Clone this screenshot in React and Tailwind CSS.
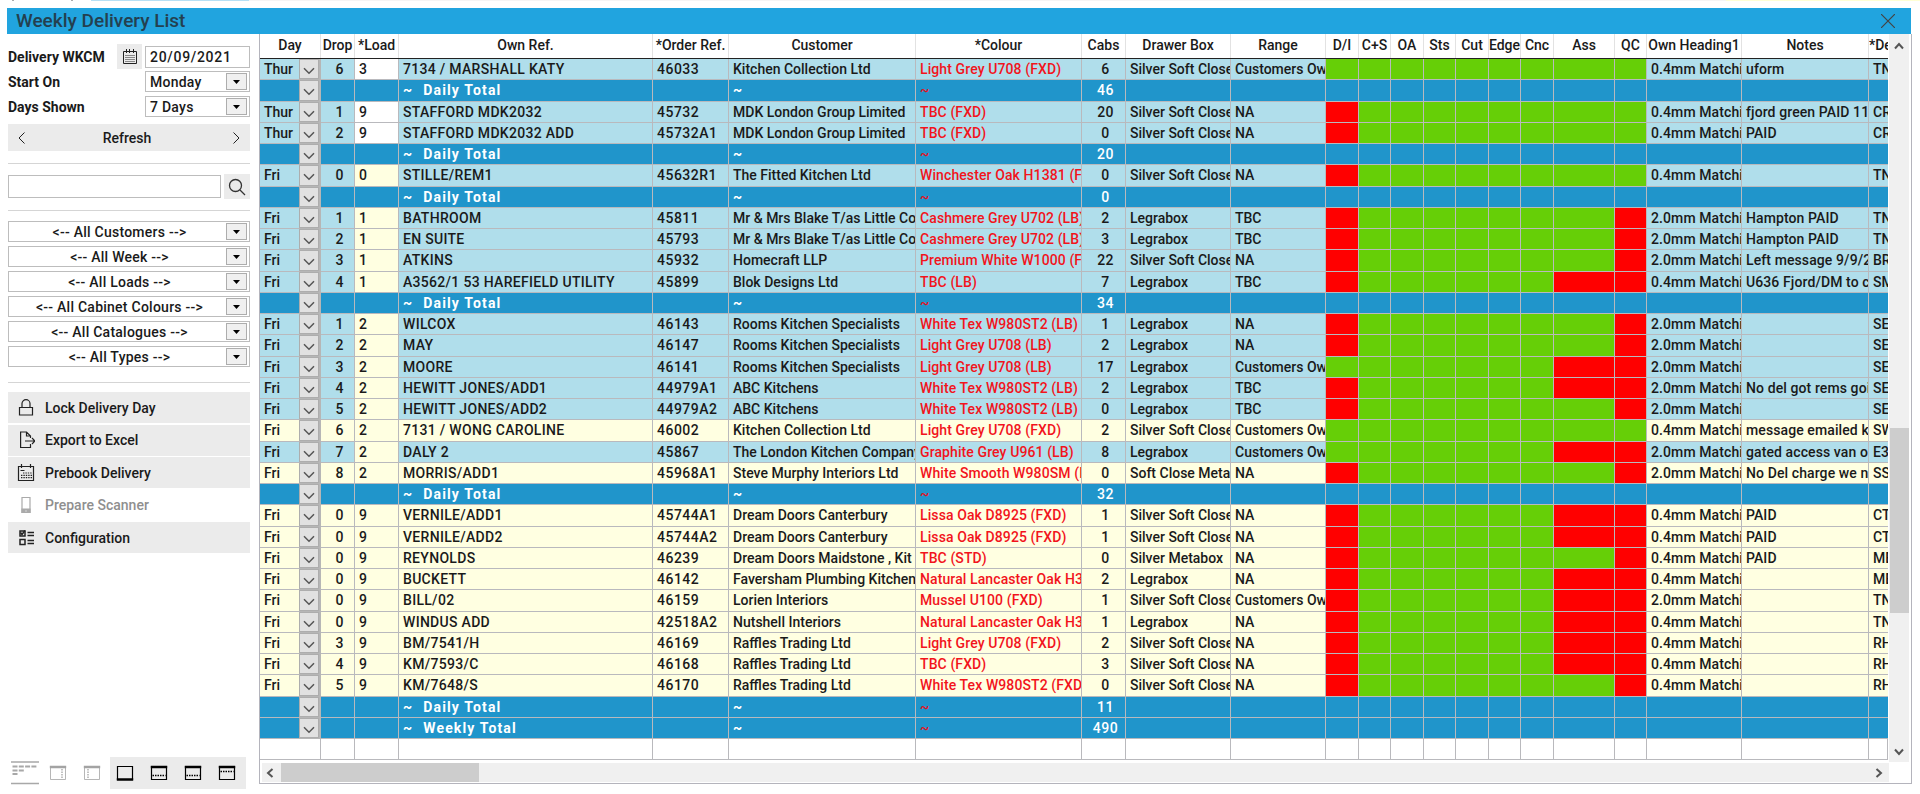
import { clsx } from 'clsx';

// Day, Drop, Load, Own Ref, Order Ref, Customer, Colour, Cabs, Drawer Box, Range, red flags, Heading1, Notes, Delivery
// flags: d = D/I, a = Ass, q = QC
const ROWS = [
  ['Thur', '6', '3', '7134 / MARSHALL KATY', '46033', 'Kitchen Collection Ltd', 'Light Grey U708 (FXD)', '6', 'Silver Soft Close', 'Customers Own', '', '0.4', 'uform', 'TN', 'blue'],
  { total: '46' },
  ['Thur', '1', '9', 'STAFFORD MDK2032', '45732', 'MDK London Group Limited', 'TBC (FXD)', '20', 'Silver Soft Close', 'NA', 'd', '0.4', 'fjord green PAID 11', 'CR', 'blue'],
  ['Thur', '2', '9', 'STAFFORD MDK2032 ADD', '45732A1', 'MDK London Group Limited', 'TBC (FXD)', '0', 'Silver Soft Close', 'NA', 'd', '0.4', 'PAID', 'CR', 'blue'],
  { total: '20' },
  ['Fri', '0', '0', 'STILLE/REM1', '45632R1', 'The Fitted Kitchen Ltd', 'Winchester Oak H1381 (FXD)', '0', 'Silver Soft Close', 'NA', 'd', '0.4', '', 'TN', 'blue'],
  { total: '0' },
  ['Fri', '1', '1', 'BATHROOM', '45811', 'Mr & Mrs Blake T/as Little Co', 'Cashmere Grey U702 (LB)', '2', 'Legrabox', 'TBC', 'dq', '2.0', 'Hampton PAID', 'TN', 'blue'],
  ['Fri', '2', '1', 'EN SUITE', '45793', 'Mr & Mrs Blake T/as Little Co', 'Cashmere Grey U702 (LB)', '3', 'Legrabox', 'TBC', 'dq', '2.0', 'Hampton PAID', 'TN', 'blue'],
  ['Fri', '3', '1', 'ATKINS', '45932', 'Homecraft LLP', 'Premium White W1000 (FXD)', '22', 'Silver Soft Close', 'NA', 'dq', '2.0', 'Left message 9/9/21', 'BR', 'blue'],
  ['Fri', '4', '1', 'A3562/1 53 HAREFIELD UTILITY', '45899', 'Blok Designs Ltd', 'TBC (LB)', '7', 'Legrabox', 'TBC', 'daq', '0.4', 'U636 Fjord/DM to c', 'SM', 'blue'],
  { total: '34' },
  ['Fri', '1', '2', 'WILCOX', '46143', 'Rooms Kitchen Specialists', 'White Tex W980ST2 (LB)', '1', 'Legrabox', 'NA', 'dq', '2.0', '', 'SE', 'blue'],
  ['Fri', '2', '2', 'MAY', '46147', 'Rooms Kitchen Specialists', 'Light Grey U708 (LB)', '2', 'Legrabox', 'NA', 'dq', '2.0', '', 'SE', 'blue'],
  ['Fri', '3', '2', 'MOORE', '46141', 'Rooms Kitchen Specialists', 'Light Grey U708 (LB)', '17', 'Legrabox', 'Customers Own', 'aq', '2.0', '', 'SE', 'blue'],
  ['Fri', '4', '2', 'HEWITT JONES/ADD1', '44979A1', 'ABC Kitchens', 'White Tex W980ST2 (LB)', '2', 'Legrabox', 'TBC', 'daq', '2.0', 'No del got rems going', 'SE', 'blue'],
  ['Fri', '5', '2', 'HEWITT JONES/ADD2', '44979A2', 'ABC Kitchens', 'White Tex W980ST2 (LB)', '0', 'Legrabox', 'TBC', 'dq', '2.0', '', 'SE', 'blue'],
  ['Fri', '6', '2', '7131 / WONG CAROLINE', '46002', 'Kitchen Collection Ltd', 'Light Grey U708 (FXD)', '2', 'Silver Soft Close', 'Customers Own', '', '0.4', 'message emailed k', 'SW', 'yellow'],
  ['Fri', '7', '2', 'DALY 2', '45867', 'The London Kitchen Company', 'Graphite Grey U961 (LB)', '8', 'Legrabox', 'Customers Own', 'aq', '2.0', 'gated access van on', 'E3', 'blue'],
  ['Fri', '8', '2', 'MORRIS/ADD1', '45968A1', 'Steve Murphy Interiors Ltd', 'White Smooth W980SM (LB)', '0', 'Soft Close Metabox', 'NA', 'dq', '2.0', 'No Del charge we n', 'SS', 'yellow'],
  { total: '32' },
  ['Fri', '0', '9', 'VERNILE/ADD1', '45744A1', 'Dream Doors Canterbury', 'Lissa Oak D8925 (FXD)', '1', 'Silver Soft Close', 'NA', 'daq', '0.4', 'PAID', 'CT', 'yellow'],
  ['Fri', '0', '9', 'VERNILE/ADD2', '45744A2', 'Dream Doors Canterbury', 'Lissa Oak D8925 (FXD)', '1', 'Silver Soft Close', 'NA', 'daq', '0.4', 'PAID', 'CT', 'yellow'],
  ['Fri', '0', '9', 'REYNOLDS', '46239', 'Dream Doors Maidstone , Kit', 'TBC (STD)', '0', 'Silver Metabox', 'NA', 'dq', '0.4', 'PAID', 'ME', 'yellow'],
  ['Fri', '0', '9', 'BUCKETT', '46142', 'Faversham Plumbing Kitchens', 'Natural Lancaster Oak H3', '2', 'Legrabox', 'NA', 'daq', '0.4', '', 'ME', 'yellow'],
  ['Fri', '0', '9', 'BILL/02', '46159', 'Lorien Interiors', 'Mussel U100 (FXD)', '1', 'Silver Soft Close', 'Customers Own', 'daq', '2.0', '', 'TN', 'yellow'],
  ['Fri', '0', '9', 'WINDUS ADD', '42518A2', 'Nutshell Interiors', 'Natural Lancaster Oak H3', '1', 'Legrabox', 'NA', 'daq', '0.4', '', 'TN', 'yellow'],
  ['Fri', '3', '9', 'BM/7541/H', '46169', 'Raffles Trading Ltd', 'Light Grey U708 (FXD)', '2', 'Silver Soft Close', 'NA', 'daq', '0.4', '', 'RH', 'yellow'],
  ['Fri', '4', '9', 'KM/7593/C', '46168', 'Raffles Trading Ltd', 'TBC (FXD)', '3', 'Silver Soft Close', 'NA', 'daq', '0.4', '', 'RH', 'yellow'],
  ['Fri', '5', '9', 'KM/7648/S', '46170', 'Raffles Trading Ltd', 'White Tex W980ST2 (FXD)', '0', 'Silver Soft Close', 'NA', 'dq', '0.4', '', 'RH', 'yellow'],
  { total: '11' },
  { total: '490', label: 'Weekly Total' },
];

const HEADERS = ['Drop', '*Load', 'Own Ref.', '*Order Ref.', 'Customer', '*Colour', 'Cabs', 'Drawer Box', 'Range', 'D/I', 'C+S', 'OA', 'Sts', 'Cut', 'Edge', 'Cnc', 'Ass', 'QC', 'Own Heading1', 'Notes'];

const FILTERS = ['<-- All Customers -->', '<-- All Week -->', '<-- All Loads -->', '<-- All Cabinet Colours -->', '<-- All Catalogues -->', '<-- All Types -->'];

const GRID = 'grid grid-cols-[39px_22px_34px_44px_254px_76px_187px_166px_44px_105px_95px_33px_32px_33px_32px_33px_32px_33px_61px_32px_95px_127px_19px]';

function Cell({ className, children }) {
  return (
    <div className={clsx('overflow-hidden whitespace-pre border-r border-b border-[#b9b9bd] pl-1', className)}>
      {children}
    </div>
  );
}

function DayPicker() {
  return (
    <div className="bg-[#b6b6b6] pb-px pr-0.5">
      <div className="flex h-full items-center justify-center border border-[#adadad] bg-[#e1e1e1] pt-1">
        <svg width="12" height="8" viewBox="0 0 12 8" fill="none" stroke="#555" strokeWidth="1.5">
          <path d="M1 1.2 6 6.2 11 1.2" />
        </svg>
      </div>
    </div>
  );
}

function TotalRow({ total, label = 'Daily Total' }) {
  return (
    <div className={clsx(GRID, 'h-[21.26px] bg-[#2095cb] leading-[21px] text-white')}>
      <Cell className="border-r-0" />
      <DayPicker />
      <Cell />
      <Cell />
      <Cell className="font-bold tracking-[1.15px]">
        ~<span className="ml-2.5">{label}</span>
      </Cell>
      <Cell />
      <Cell className="font-bold">~</Cell>
      <Cell className="text-[#e0141e]">~</Cell>
      <Cell className="pl-0 text-center tracking-[0.6px]">{total}</Cell>
      {Array.from({ length: 13 }, (_, i) => <Cell key={i} />)}
      <Cell className="border-r-0" />
    </div>
  );
}

function DeliveryRow({ row }) {
  const [day, drop, load, ownRef, orderRef, customer, colour, cabs, box, range, flags, heading, notes, del, tone] = row;
  const red = [flags.includes('d'), false, false, false, false, false, false, flags.includes('a'), flags.includes('q')];
  return (
    <div className={clsx(GRID, 'h-[21.26px] leading-[21px]', tone === 'blue' ? 'bg-[#b0deeb]' : 'bg-[#ffffe1]')}>
      <Cell className="border-r-0">{day}</Cell>
      <DayPicker />
      <Cell className="pl-0 text-center">{drop}</Cell>
      <Cell className={day === 'Thur' ? 'bg-white' : 'bg-[#ffffe1]'}>{load}</Cell>
      <Cell className="tracking-[0.3px]">{ownRef}</Cell>
      <Cell className="tracking-[0.5px]">{orderRef}</Cell>
      <Cell>{customer}</Cell>
      <Cell className="tracking-[0.1px] text-[#f2141c]">{colour}</Cell>
      <Cell className="pl-0 text-center tracking-[0.4px]">{cabs}</Cell>
      <Cell>{box}</Cell>
      <Cell>{range}</Cell>
      {red.map((isRed, i) => <Cell key={i} className={isRed ? 'bg-[#ff0000]' : 'bg-[#66cf07]'} />)}
      <Cell className="tracking-[0.1px]">{heading}mm Matching</Cell>
      <Cell className="tracking-[0.1px]">{notes}</Cell>
      <Cell className="border-r-0">{del}</Cell>
    </div>
  );
}

function Select({ label, centered }) {
  return (
    <div className="flex h-[21px] w-full items-center border border-[#bdbdbd] bg-white pr-0.5">
      <span className={clsx('flex-1 tracking-[0.25px]', centered ? 'pl-1 text-center' : 'pl-1')}>{label}</span>
      <span className="flex h-[17px] w-[21px] items-center justify-center border border-[#adadad] bg-[#f0f0f0]">
        <svg width="7" height="4" viewBox="0 0 7 4"><path d="M0 0h7L3.5 4z" fill="#000" /></svg>
      </span>
    </div>
  );
}

function CalendarIcon() {
  return (
    <svg width="16" height="16" viewBox="0 0 16 16" fill="none" stroke="#222">
      <path d="M1.5 2.5h13v12h-13zM4.5 0v4M7.5 0v4M11.500 0v4" />
      <path d="M3.5 6.5h9M3.5 8.5h9M3.5 10.5h9M3.5 12.500h9" strokeDasharray="1 1" />
    </svg>
  );
}

const iconProps = { width: 18, height: 18, viewBox: '0 0 18 18', fill: 'none', stroke: '#222', strokeWidth: 1.2 };

const ACTIONS = [
  {
    label: 'Lock Delivery Day',
    icon: <svg {...iconProps}><path d="M2.5 8.5h13v7.5h-13zM5 8.5V4.5a4 3.8 0 0 1 8 0v4" /></svg>,
  },
  {
    label: 'Export to Excel',
    icon: <svg {...iconProps}><path d="M13.5 7V5L9.5 1H3.6v15.5h9.9V13M9.5 1v4h4M8 10h10M15 7l3 3-3 3" /></svg>,
  },
  {
    label: 'Prebook Delivery',
    icon: (
      <svg {...iconProps}>
        <path d="M1.5 2.5h15v14h-15zM4.5 0v4M13.5 0v4M3.5 6.5h4" />
        <path d="M6 9h9M4 11.3h11M4 13.6h11" strokeDasharray="1.4 1" />
      </svg>
    ),
  },
  {
    label: 'Prepare Scanner',
    disabled: true,
    icon: <svg {...iconProps} stroke="#aaa"><path d="M5 1.5h8v15H5z" /><path d="M5 13h8v3.5H5z" fill="#aaa" /><path d="M8.5 15h1" stroke="#fff" /></svg>,
  },
  {
    label: 'Configuration',
    icon: (
      <svg {...iconProps} strokeWidth="1.5">
        <path d="M3 2h5v5H3zM3 10.5h5v5H3zM10.5 3.5h6.500M10.500 6.500h6.500M10.500 11.500h6.500M10.500 14.500h6.500" />
        <path d="M3.5 3.5 5 5.500l3-4" />
      </svg>
    ),
  },
];

function PaneIcon({ bar, dots, faded }) {
  const ink = faded ? '#a3a3a3' : '#000';
  return (
    <svg width="18" height="16" viewBox="0 0 18 16" fill="none" stroke={ink}>
      <path d="M1.5 1.5h15v13h-15z" strokeWidth={faded ? 0.8 : 1.2} />
      <path d={bar === 'bottom' ? 'M.8 14.500h16.400' : 'M.8 2h16.400'} strokeWidth="2.5" />
      {dots && <path d={dots} strokeDasharray="1.5 1" strokeWidth="1.3" />}
    </svg>
  );
}

function Sidebar() {
  return (
    <aside className="flex w-[252px] shrink-0 flex-col pl-2 pr-0.5">
      <div className="mt-[10px] flex h-[25px] items-center">
        <span className="w-[109px] font-bold">Delivery WKCM</span>
        <span className="flex h-[25px] w-[25px] items-center justify-center bg-[#ebebeb]"><CalendarIcon /></span>
        <span className="ml-[3px] h-[22px] w-[105px] border border-[#bdbdbd] bg-white pl-1 text-[14px] leading-5 tracking-[0.7px]">20/09/2021</span>
      </div>
      <div className="mt-0.5 flex h-[21px] items-center">
        <span className="w-[137px] shrink-0 font-bold">Start On</span>
        <Select label="Monday" />
      </div>
      <div className="mt-1 flex h-[21px] items-center">
        <span className="w-[137px] shrink-0 font-bold">Days Shown</span>
        <Select label="7 Days" />
      </div>
      <div className="mt-[7px] flex h-[27px] items-center justify-between bg-[#ebebeb] px-2.5">
        <svg width="7" height="12" viewBox="0 0 7 12" fill="none" stroke="#222"><path d="M6.5.5 1 6l5.500 5.500" /></svg>
        <span className="mr-1">Refresh</span>
        <svg width="7" height="12" viewBox="0 0 7 12" fill="none" stroke="#222"><path d="M.5.5 6 6 .5 11.500" /></svg>
      </div>
      <div className="mt-3 h-px bg-[#d5d5d5]" />
      <div className="mt-2.5 flex h-[25px] items-center gap-[3px]">
        <div className="h-[23px] w-[213px] border border-[#bdbdbd] bg-white" />
        <div className="flex h-[25px] w-[26px] items-center justify-center bg-[#ebebeb]">
          <svg width="18" height="18" viewBox="0 0 18 18" fill="none" stroke="#333" strokeWidth="1.3">
            <circle cx="7.5" cy="7.5" r="6" />
            <path d="m12 12 5 5" />
          </svg>
        </div>
      </div>
      <div className="mt-[11px] h-px bg-[#d5d5d5]" />
      <div className="mt-2.5 flex flex-col gap-1">
        {FILTERS.map((label) => <Select key={label} label={label} centered />)}
      </div>
      <div className="mt-[15px] h-px bg-[#d5d5d5]" />
      <div className="mt-[9px] flex flex-col gap-[1.5px]">
        {ACTIONS.map(({ label, icon, disabled }) => (
          <div key={label} className={clsx('flex h-[31px] items-center gap-2.5 pl-[9px]', disabled ? 'text-[#8f8f8f]' : 'bg-[#ebebeb]')}>
            {icon}
            <span>{label}</span>
          </div>
        ))}
      </div>
      <div className="mt-auto mb-[5px] flex h-8 items-center">
        <svg className="ml-[3px]" width="28" height="24" viewBox="0 0 28 24" stroke="#a8a8a8" fill="none">
          <path d="M0 1h28M0 22.5h28" strokeWidth="1.5" />
          <path d="M1.5 5.500h24.500M1.500 9.500h12M1.500 13h6" strokeWidth="2" strokeDasharray="5 1.3" />
        </svg>
        <div className="ml-2.5 flex gap-4">
          <PaneIcon faded dots="M13 4v10" />
          <PaneIcon faded dots="M5 4v10" />
        </div>
        <div className="ml-[9px] flex h-8 w-[136px] items-center gap-4 bg-[#ebebeb] pl-1.5">
          <PaneIcon bar="bottom" />
          <PaneIcon dots="M2.500 10.500h13" />
          <PaneIcon dots="M2.500 10.500h13" />
          <PaneIcon dots="M2.500 6.500h13" />
        </div>
      </div>
    </aside>
  );
}

function DeliveryTable() {
  return (
    <div className="ml-[7px] flex h-[750px] w-[1653px] shrink-0 flex-col border-r border-b border-l border-[#b4b4bc]">
      <div className="flex h-[728px]">
        <div className="w-[1628px] shrink-0 overflow-hidden">
          <div className={clsx(GRID, 'h-[25px] border-b border-[#222] leading-[23px]')}>
            <div className="col-span-2 border-r border-[#e2e2e2] text-center">Day</div>
            {HEADERS.map((header) => (
              <div key={header} className="flex justify-center overflow-hidden whitespace-nowrap border-r border-[#e2e2e2]">{header}</div>
            ))}
            <div className="overflow-hidden whitespace-nowrap">*Del</div>
          </div>
          {ROWS.map((row, i) => (Array.isArray(row) ? <DeliveryRow key={i} row={row} /> : <TotalRow key={i} {...row} />))}
          <div className={clsx(GRID, 'h-[21px]')}>
            <Cell className="col-span-2" />
            {Array.from({ length: 21 }, (_, i) => <Cell key={i} />)}
          </div>
        </div>
        <div className="ml-px flex w-5 flex-col items-center bg-[#f0f0f0]">
          <svg className="mt-2 shrink-0" width="10" height="8" viewBox="0 0 10 8" fill="none" stroke="#555" strokeWidth="2"><path d="m1 6.5 4-4.500 4 4.500" /></svg>
          <div className="mt-[378px] h-[185px] w-[19px] shrink-0 bg-[#cdcdcd]" />
          <svg className="mt-auto mb-1.5 shrink-0" width="10" height="8" viewBox="0 0 10 8" fill="none" stroke="#555" strokeWidth="2"><path d="m1 1.5 4 4.500 4-4.500" /></svg>
        </div>
      </div>
      <div className="mt-px ml-0.5 flex h-[19px] w-[1627px] items-center bg-[#f0f0f0]">
        <svg className="ml-1" width="8" height="10" viewBox="0 0 8 10" fill="none" stroke="#555" strokeWidth="2"><path d="M6.5 1 2 5l4.500 4" /></svg>
        <div className="ml-[7px] h-[19px] w-[198px] bg-[#cdcdcd]" />
        <svg className="mr-1.5 ml-auto" width="8" height="10" viewBox="0 0 8 10" fill="none" stroke="#555" strokeWidth="2"><path d="M1.5 1 6 5 1.500 9" /></svg>
      </div>
    </div>
  );
}

export default function App() {
  return (
    <div className="flex h-[794px] w-[1920px] flex-col overflow-hidden bg-white font-['Roboto',sans-serif] text-[14px] leading-5 font-medium text-[#1a1a1a]">
      <div className="flex h-px shrink-0">
        <div className="w-3" />
        <div className="w-0.5 bg-[#aaa]" />
        <div className="ml-[57px] w-0.5 bg-[#aaa]" />
        <div className="ml-[18px] w-[158px] bg-[#b5e0f5]" />
        <div className="w-[1477px] bg-[#f5f5f5]" />
        <div className="flex-1 bg-[#ffffd5]" />
      </div>
      <header className="mt-[7px] mr-[9px] ml-[7px] flex h-[26px] shrink-0 items-center justify-between bg-[#21a4df] pr-4 pl-[9px] text-[#24404f]">
        <h1 className="text-[19px]">Weekly Delivery List</h1>
        <svg width="14" height="14" viewBox="0 0 14 14" stroke="#444" strokeWidth="1.2"><path d="m0 0 14 14M14 0 0 14" /></svg>
      </header>
      <div className="flex min-h-0 flex-1">
        <Sidebar />
        <DeliveryTable />
      </div>
    </div>
  );
}
